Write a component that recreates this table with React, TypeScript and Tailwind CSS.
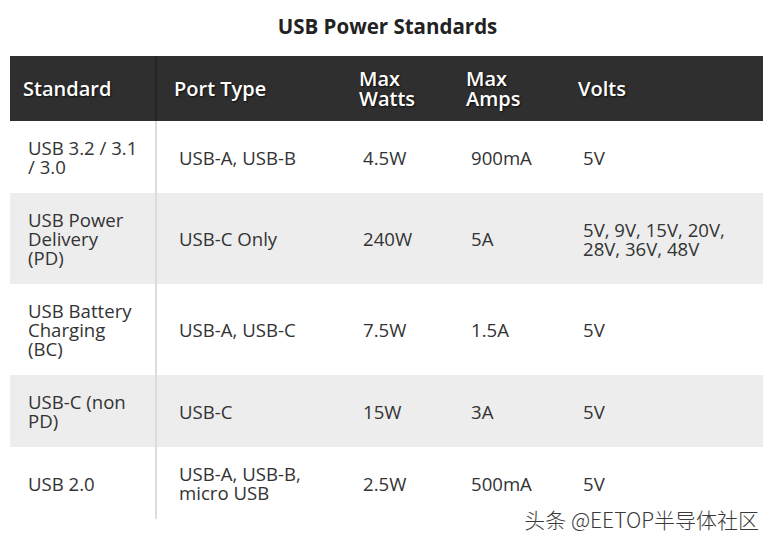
import React from 'react';

interface Row {
  standard: string[];
  port: string[];
  watts: string;
  amps: string;
  volts: string[];
}

const rows: Row[] = [
  { standard: ['USB 3.2 / 3.1', '/ 3.0'], port: ['USB-A, USB-B'], watts: '4.5W', amps: '900mA', volts: ['5V'] },
  { standard: ['USB Power', 'Delivery', '(PD)'], port: ['USB-C Only'], watts: '240W', amps: '5A', volts: ['5V, 9V, 15V, 20V,', '28V, 36V, 48V'] },
  { standard: ['USB Battery', 'Charging', '(BC)'], port: ['USB-A, USB-C'], watts: '7.5W', amps: '1.5A', volts: ['5V'] },
  { standard: ['USB-C (non', 'PD)'], port: ['USB-C'], watts: '15W', amps: '3A', volts: ['5V'] },
  { standard: ['USB 2.0'], port: ['USB-A, USB-B,', 'micro USB'], watts: '2.5W', amps: '500mA', volts: ['5V'] },
];

const cols = 'grid grid-cols-[147px_185px_107px_112px_202px]';

const Lines = ({ lines }: { lines: string[] }) => (
  <div>
    {lines.map((l, i) => (
      <div key={i}>{l}</div>
    ))}
  </div>
);

export default function App() {
  return (
    <div className="relative w-[775px] h-[547px] bg-white font-['Open_Sans',sans-serif] overflow-hidden">
      {/* Title */}
      <div className="h-[56px] flex items-center justify-center pb-[3px] text-[20.5px] font-bold text-[#222]">
        USB Power Standards
      </div>

      {/* Table */}
      <div className="mx-[10px] w-[753px]">
        <div className={`${cols} h-[65px] bg-[#2f2f2f] text-white font-semibold text-[20px] leading-[20px] [text-shadow:1px_1px_2px_rgba(0,0,0,0.7)]`}>
          <div className="pl-[13px] flex items-center border-r-2 border-[#252525]">Standard</div>
          <div className="pl-[17px] flex items-center">Port Type</div>
          <div className="pl-[17px] flex items-center">
            <Lines lines={['Max', 'Watts']} />
          </div>
          <div className="pl-[17px] flex items-center">
            <Lines lines={['Max', 'Amps']} />
          </div>
          <div className="pl-[17px] flex items-center">Volts</div>
        </div>

        {rows.map((r, i) => (
          <div
            key={i}
            className={`${cols} text-[18.6px] leading-[19px] text-[#333] ${i % 2 === 1 ? 'bg-[#ededed]' : 'bg-white'}`}
          >
            <div className="pl-[18px] py-[17px] flex items-center border-r-2 border-[#dcdcdc]">
              <Lines lines={r.standard} />
            </div>
            <div className="pl-[22px] py-[17px] flex items-center">
              <Lines lines={r.port} />
            </div>
            <div className="pl-[21px] py-[17px] flex items-center">{r.watts}</div>
            <div className="pl-[22px] py-[17px] flex items-center">{r.amps}</div>
            <div className="pl-[22px] py-[17px] flex items-center">
              <Lines lines={r.volts} />
            </div>
          </div>
        ))}
      </div>

      {/* Watermark */}
      <div className="absolute right-[16px] bottom-[16px] text-[21px] leading-[24px] font-light text-[#3a3a3a] font-['Noto_Sans_CJK_SC','Noto_Sans',sans-serif] [text-shadow:0_0_2px_#fff,0_0_2px_#fff]">
        头条 @EETOP半导体社区
      </div>
    </div>
  );
}
